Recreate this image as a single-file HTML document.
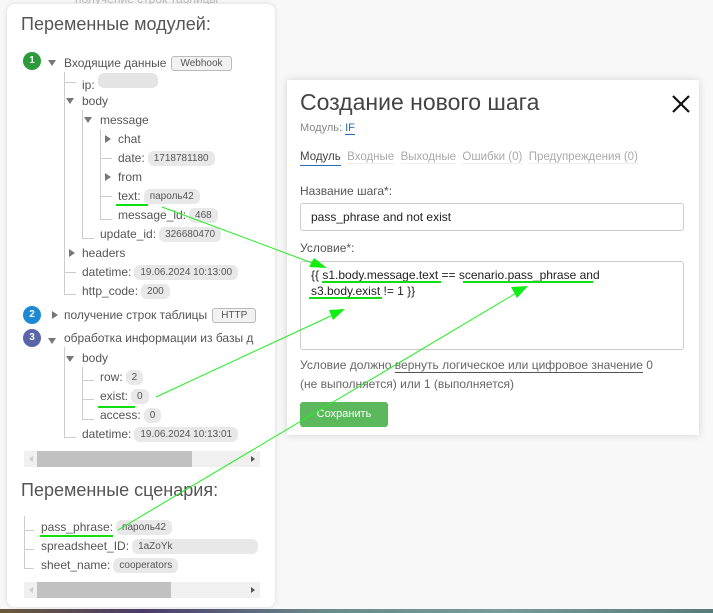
<!DOCTYPE html>
<html><head><meta charset="utf-8"><style>
*{margin:0;padding:0;box-sizing:border-box}
body{width:713px;height:613px;overflow:hidden;background:#f8f8f8;font-family:"Liberation Sans","Noto Sans CJK SC",sans-serif;font-size:12px;color:#555;position:relative}
.a{position:absolute;white-space:nowrap}
.panel{position:absolute;left:7px;top:4px;width:268px;height:603px;background:#fff;border-radius:8px;box-shadow:0 0 6px rgba(0,0,0,.12);overflow:hidden}
.r{position:absolute;white-space:nowrap;height:19px;line-height:19px;font-size:12px;color:#555}
.b{display:inline-block;background:#e8e8e8;border-radius:6px;font-size:10px;padding:0 6px;height:15px;line-height:15px;margin-left:3px;vertical-align:1px;color:#555}
.bb{display:inline-block;border:1px solid #bbb;background:#f2f2f2;border-radius:3px;font-size:10px;padding:0 8px;height:15px;line-height:13px;margin-left:5px;vertical-align:1px;color:#555}
.tri{position:absolute;width:0;height:0}
.dn{border-left:4px solid transparent;border-right:4px solid transparent;border-top:6px solid #777}
.rt{border-top:4px solid transparent;border-bottom:4px solid transparent;border-left:6px solid #777}
.vl{position:absolute;width:1px;background:#ccc}
.hl{position:absolute;height:1px;background:#ccc}
.num{position:absolute;width:18px;height:18px;border-radius:50%;color:#fff;font-size:10px;font-weight:bold;text-align:center;line-height:18px}
.sb{position:absolute;left:17px;width:236px;height:16px;background:#f0f0f0}
.sb .th{position:absolute;left:13px;top:0;height:16px;background:#c1c1c1}
.modal{position:absolute;left:287px;top:80px;width:412px;height:355px;background:#fff;box-shadow:0 0 8px rgba(0,0,0,.15)}
</style></head><body>
<div class="a" style="left:75px;top:-8px;color:#bbb;font-size:12px">получение строк таблицы</div>
<div class="panel">
<div class="a" style="left:14px;top:10px;font-size:18px;color:#555">Переменные модулей:</div>
<div class="num" style="left:16px;top:48px;background:#2b9a3a">1</div>
<div class="tri dn" style="left:41px;top:56px"></div>
<div class="r" style="left:57px;top:50px">Входящие данные<span class="bb">Webhook</span></div>
<div class="vl" style="left:57px;top:68px;height:223px"></div>
<div class="hl" style="left:57px;top:78px;width:12px"></div>
<div class="r" style="left:75px;top:69px">ip:<span class="b" style="width:60px;background:#e4e4e4"></span></div>
<div class="tri dn" style="left:59px;top:94px"></div>
<div class="r" style="left:75px;top:88px">body</div>
<div class="vl" style="left:75px;top:106px;height:129px"></div>
<div class="tri dn" style="left:77px;top:113px"></div>
<div class="r" style="left:93px;top:107px">message</div>
<div class="vl" style="left:93px;top:125px;height:91px"></div>
<div class="tri rt" style="left:98px;top:131px"></div>
<div class="r" style="left:111px;top:126px">chat</div>
<div class="hl" style="left:93px;top:154px;width:12px"></div>
<div class="r" style="left:111px;top:145px">date:<span class="b">1718781180</span></div>
<div class="tri rt" style="left:98px;top:169px"></div>
<div class="r" style="left:111px;top:164px">from</div>
<div class="hl" style="left:93px;top:192px;width:12px"></div>
<div class="r" style="left:111px;top:183px">text:<span class="b">пароль42</span></div>
<div class="a" style="left:109px;top:200px;width:32px;height:2px;background:#1d1"></div>
<div class="hl" style="left:93px;top:215px;width:12px"></div>
<div class="r" style="left:111px;top:202px">message_id:<span class="b">468</span></div>
<div class="hl" style="left:75px;top:234px;width:12px"></div>
<div class="r" style="left:93px;top:221px">update_id:<span class="b">326680470</span></div>
<div class="tri rt" style="left:62px;top:245px"></div>
<div class="r" style="left:75px;top:240px">headers</div>
<div class="hl" style="left:57px;top:268px;width:12px"></div>
<div class="r" style="left:75px;top:259px">datetime:<span class="b">19.06.2024 10:13:00</span></div>
<div class="hl" style="left:57px;top:290px;width:12px"></div>
<div class="r" style="left:75px;top:278px">http_code:<span class="b">200</span></div>
<div class="num" style="left:16px;top:302px;background:#1e88d4">2</div>
<div class="tri rt" style="left:45px;top:307px"></div>
<div class="r" style="left:57px;top:302px">получение строк таблицы<span class="bb">HTTP</span></div>
<div class="num" style="left:16px;top:325px;background:#5a64a8">3</div>
<div class="tri dn" style="left:41px;top:334px"></div>
<div class="r" style="left:57px;top:325px">обработка информации из базы д</div>
<div class="vl" style="left:57px;top:343px;height:91px"></div>
<div class="tri dn" style="left:59px;top:352px"></div>
<div class="r" style="left:75px;top:345px">body</div>
<div class="vl" style="left:75px;top:363px;height:53px"></div>
<div class="hl" style="left:75px;top:376px;width:12px"></div>
<div class="r" style="left:93px;top:364px">row:<span class="b">2</span></div>
<div class="hl" style="left:75px;top:395px;width:12px"></div>
<div class="r" style="left:93px;top:383px">exist:<span class="b">0</span></div>
<div class="a" style="left:91px;top:402px;width:37px;height:2px;background:#1d1"></div>
<div class="hl" style="left:75px;top:415px;width:12px"></div>
<div class="r" style="left:93px;top:402px">access:<span class="b">0</span></div>
<div class="hl" style="left:57px;top:433px;width:12px"></div>
<div class="r" style="left:75px;top:421px">datetime:<span class="b">19.06.2024 10:13:01</span></div>
<div class="sb" style="top:447px"><div class="th" style="width:155px"></div><div class="tri" style="left:5px;top:5px;border-top:3px solid transparent;border-bottom:3px solid transparent;border-right:4px solid #ccc"></div><div class="tri" style="right:5px;top:5px;border-top:3px solid transparent;border-bottom:3px solid transparent;border-left:4px solid #555"></div></div>
<div class="a" style="left:14px;top:476px;font-size:18px;color:#555">Переменные сценария:</div>
<div class="vl" style="left:17px;top:512px;height:52px"></div>
<div class="hl" style="left:17px;top:526px;width:10px"></div>
<div class="r" style="left:34px;top:514px">pass_phrase:<span class="b">пароль42</span></div>
<div class="a" style="left:33px;top:531px;width:73px;height:2px;background:#1d1"></div>
<div class="hl" style="left:17px;top:545px;width:10px"></div>
<div class="r" style="left:34px;top:533px">spreadsheet_ID:<span class="b" style="width:126px">1aZoYk</span></div>
<div class="hl" style="left:17px;top:564px;width:10px"></div>
<div class="r" style="left:34px;top:552px">sheet_name:<span class="b">cooperators</span></div>
<div class="sb" style="top:578px"><div class="th" style="width:134px"></div><div class="tri" style="left:5px;top:5px;border-top:3px solid transparent;border-bottom:3px solid transparent;border-right:4px solid #ccc"></div><div class="tri" style="right:5px;top:5px;border-top:3px solid transparent;border-bottom:3px solid transparent;border-left:4px solid #555"></div></div>
</div>

<div class="modal">
<div class="a" style="left:13px;top:9px;font-size:23px;color:#444">Создание нового шага</div>
<svg class="a" style="left:384px;top:14px" width="20" height="20"><path d="M2 2L18 18M18 2L2 18" stroke="#111" stroke-width="2.2"/></svg>
<div class="a" style="left:13px;top:42px;font-size:11px;color:#888">Модуль: <span style="color:#2a6db5;border-bottom:1px solid #2a6db5">IF</span></div>
<div class="a" style="left:13px;top:71px;font-size:11.5px;color:#aaa">
<span style="color:#444;border-bottom:1px solid #2a6db5;padding-bottom:2px">Модуль</span>&nbsp; <span style="border-bottom:1px solid #eee">Входные</span>&nbsp; <span style="border-bottom:1px solid #eee">Выходные</span>&nbsp; <span style="border-bottom:1px solid #eee">Ошибки (0)</span>&nbsp; <span style="border-bottom:1px solid #eee">Предупреждения (0)</span></div>
<div class="a" style="left:13px;top:104px;font-size:12px;color:#555">Название шага*:</div>
<div class="a" style="left:13px;top:123px;width:384px;height:28px;border:1px solid #ccc;border-radius:3px;padding:6px 10px;font-size:12px;color:#222">pass_phrase and not exist</div>
<div class="a" style="left:13px;top:161px;font-size:12px;color:#555">Условие*:</div>
<div class="a" style="left:13px;top:181px;width:384px;height:89px;border:1px solid #ccc;border-radius:3px;padding:5px 10px;font-size:12px;line-height:16px;color:#222;white-space:normal">{{ s1.body.message.text == scenario.pass_phrase and<br>s3.body.exist != 1 }}</div>
<div class="a" style="left:13px;top:276px;font-size:12px;line-height:19px;color:#666;white-space:normal;width:370px">Условие должно <span style="border-bottom:1px solid #555">вернуть логическое или цифровое значение</span> 0<br>(не выполняется) или 1 (выполняется)</div>
<div class="a" style="left:13px;top:322px;width:88px;height:25px;background:#5cb85c;border-radius:3px;color:#fff;font-size:11px;text-align:center;line-height:25px">Сохранить</div>
</div>

<svg class="a" style="left:0;top:0" width="713" height="613">
<g fill="#1d1" stroke="none">
<rect x="322" y="281" width="119" height="2"/>
<rect x="463" y="281" width="130" height="2"/>
<rect x="309" y="297" width="73" height="2"/>
</g>
<g stroke="#2e2" stroke-width="1" fill="none">
<line x1="162" y1="207" x2="315" y2="264"/>
<line x1="156" y1="397" x2="335" y2="314"/>
<line x1="118" y1="530" x2="518" y2="292"/>
</g>
<g fill="#1e1">
<polygon points="327,268 309,267 314,258"/>
<polygon points="345,309 329,310 333,320"/>
<polygon points="528,286 511,287 517,298"/>
</g>
</svg>
<div class="a" style="left:0;top:609px;width:713px;height:4px;background:linear-gradient(90deg,#6a5a3a,#4a3a6a 20%,#6a8a8a 45%,#7a9a9a 70%,#5a7a7a)"></div>
</body></html>
